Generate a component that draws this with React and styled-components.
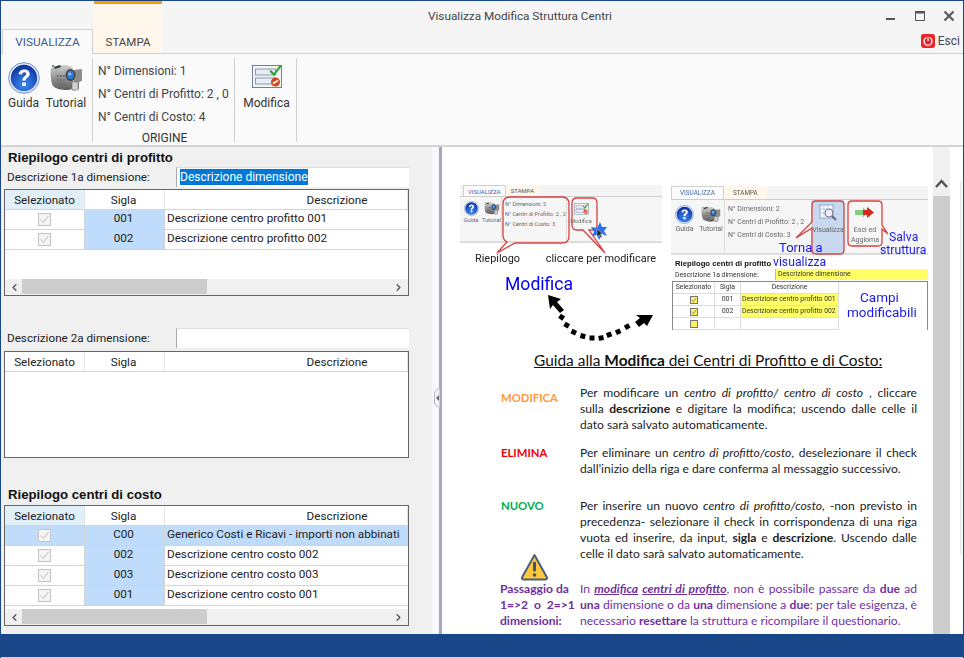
import React from "react";
import styled, { createGlobalStyle } from "styled-components";
import { ChevronLeft, ChevronRight } from "lucide-react";

const Global = createGlobalStyle`
  html, body { margin: 0; padding: 0; width: 964px; height: 658px; overflow: hidden; background: #fff; }
  * { box-sizing: border-box; }
`;

const UI = `"Roboto", "Liberation Sans", sans-serif`;
const DOC = `"Lato", "Liberation Sans", sans-serif`;

const Windowed = styled.div`
  width: 964px; height: 658px; display: flex; flex-direction: column;
  border-top: 1px solid #1a4789; border-left: 1px solid #1a4789; border-right: 1px solid #1a4789;
  font: 12px ${UI}; color: #333; background: #f5f5f5; overflow: hidden;
`;
const Header = styled.header`
  display: grid; grid-template-columns: 91px 69px 1fr auto; grid-template-rows: 28px 24px;
  background: #f5f5f5; padding-left: 1px; height: 52px; flex: none;
`;
const Tab = styled.div`
  grid-column: 1; grid-row: 2; display: flex; align-items: center; justify-content: center;
  background: #fafafa; color: #3b5a92; border: 1px solid #d0d0d0; border-bottom: none; font-size: 11.8px;
  margin-bottom: -1px; z-index: 1;
`;
const ContextTab = styled.div`
  grid-column: 2; grid-row: 1 / 3; display: flex; align-items: flex-end; justify-content: center;
  background: #fff7ec; border-top: 4px solid #ff9a00; color: #444; padding: 0 0 4px; margin-top: -1px; margin-left: 1px;
  font-size: 11.5px;
`;
const Title = styled.div`
  grid-column: 3; grid-row: 1; padding: 8px 0 0 266px; color: #444; font-size: 11.75px; white-space: nowrap;
`;
const Controls = styled.div`
  grid-column: 4; grid-row: 1; display: flex; align-items: center; gap: 17px; padding: 2px 8px 0 0;
  svg { display: block; }
`;
const Exit = styled.div`
  grid-column: 3 / 5; grid-row: 2; justify-self: end; display: flex; align-items: center; gap: 3px;
  padding: 0 3px 0 0; color: #445;
`;
const Ribbon = styled.div`
  height: 94px; flex: none; display: flex; background: #fafafa; border-top: 1px solid #d0d0d0; border-bottom: 2px solid #d4d4d4;
  padding: 4px 0 3px;
`;
const RibbonGroup = styled.div`
  width: ${p => p.$w}px; border-right: 1px solid #d0d0d0; display: flex; flex-direction: ${p => p.$col ? "column" : "row"};
  flex: none;
`;
const RibbonButton = styled.div`
  width: ${p => p.$w}px; flex: none; display: flex; flex-direction: column; align-items: center; padding-top: ${p => p.$top}px;
  gap: ${p => p.$gap}px;
  span { white-space: nowrap; }
`;
const InfoLines = styled.div`
  display: flex; flex-direction: column; gap: 7px; padding: 5px 0 0 5px; flex: 1; white-space: nowrap; color: #444;
  line-height: 16px;
`;
const GroupName = styled.div`
  text-align: center; font-size: 12px; line-height: 8px; color: #333; padding-left: 2px;
`;
const Body = styled.main`
  flex: 1; display: flex; min-height: 0; background: #f0f0f0;
`;
const Left = styled.section`
  width: 431px; flex: none; padding: 4px 0 0 3px; display: flex; flex-direction: column; font-size: 11.7px;
`;
const SectionTitle = styled.h2`
  margin: ${p => p.$top || 0}px 0 0 4px; font: bold 13.2px/14px "Liberation Sans", sans-serif; color: #111;
`;
const FieldRow = styled.div`
  display: flex; height: 20px; align-items: center; margin-top: ${p => p.$top}px; padding-left: 3px; color: #222;
`;
const FieldLabel = styled.label`
  width: 169px; flex: none;
`;
const Input = styled.div`
  width: 233px; height: 20px; background: #fff; border-left: 1px solid #aaa; border-top: 1px solid #ddd; padding: 1px 0 0 3px;
  font-size: 12px; line-height: 16px;
`;
const Selected = styled.span`
  background: #0078d7; color: #fff; display: inline-block;
`;
const Grid = styled.div`
  width: 405px; height: ${p => p.$h}px; margin-top: ${p => p.$top}px; background: #fff; border: 1px solid #666;
  display: flex; flex-direction: column; flex: none; color: #222; overflow: hidden;
`;
const Row = styled.div`
  display: grid; grid-template-columns: 80px 80px 1fr; height: 20px; flex: none;
  border-bottom: 1px solid #d4d4d4;
  background: ${p => p.$sel ? "#c0dcfc" : "transparent"};
`;
const HeadCell = styled.div`
  display: flex; align-items: center; justify-content: center; background: ${p => p.$on ? "#e1eff8" : "#fff"};
  border-right: 1px solid #e4e4e4; padding-top: 1px;
  padding-left: ${p => p.$pl || 0}px; padding-right: ${p => p.$pr || 0}px;
`;
const CheckCell = styled.div`
  display: flex; align-items: center; justify-content: center; border-right: 1px solid #d4d4d4;
`;
const CodeCell = styled.div`
  background: #c0dcfc; display: flex; align-items: center; justify-content: center; border-right: 1px solid #d4d4d4;
  padding: 0 2px 4px 0;
`;
const TextCell = styled.div`
  padding: 0 0 4px 2px; display: flex; align-items: center; white-space: nowrap; overflow: hidden;
`;
const Box = styled.div`
  width: 13px; height: 13px; border: 1px solid #c4c4c4; background: #f4f4f4; display: flex;
  svg { display: block; }
`;
const Fill = styled.div` flex: 1; `;
const HBar = styled.div`
  height: 16px; flex: none; background: #f0f0f0; display: flex; align-items: center; justify-content: space-between;
  padding: 0 4px; position: relative; color: #555;
`;
const Thumb = styled.div`
  position: absolute; left: 17px; top: 0; bottom: 1px; width: 185px; background: #cdcdcd;
`;
const Splitter = styled.div`
  width: 7px; flex: none; background: #f6f8fe; position: relative;
`;
const Grip = styled.svg`
  position: absolute; left: 2px; top: 241px;
`;
const Divider = styled.div`
  width: 3px; flex: none; background: #a6a6bc;
`;
const Doc = styled.div`
  width: 491px; flex: none; background: #fff; overflow: hidden; font-family: ${DOC}; color: #222;
`;
const Scroll = styled.div`
  width: 17px; flex: none; margin-top: 15px; background: #cdcdcd; display: flex; flex-direction: column;
`;
const ScrollTop = styled.div`
  height: 34px; background: #f0f0f0; display: flex; align-items: flex-end; justify-content: center; padding-bottom: 8px;
`;
const Margin = styled.div`
  flex: 1; background: #fff; padding: 34px 0 0 10px;
`;
const EdgeLine = styled.div`
  width: 2px; height: 374px; background: #ececec;
`;
const GuideTop = styled.div`
  position: relative; height: 199px; padding: 38px 0 0 18px; display: flex; filter: blur(.3px); font-family: ${UI};
`;
const MiniCol = styled.div`
  width: ${p => p.$w}px; margin-left: ${p => p.$ml || 0}px; padding-top: ${p => p.$top || 0}px; flex: none;
`;
const MiniTabs = styled.div`
  height: ${p => p.$h}px; display: flex; align-items: flex-end; background: #f4f4f4; padding-left: ${p => p.$pl}px;
  font-size: ${p => p.$fs}px; border-bottom: 1px solid #ccc;
`;
const MiniTab = styled.div`
  padding: 0 ${p => p.$px}px; height: 100%; display: flex; align-items: center; color: ${p => p.$ctx ? "#555" : "#4668a8"};
  background: ${p => p.$ctx ? "#fff7ec" : "#fbfbfb"}; border: ${p => p.$ctx ? "none" : "1px solid #d0d0d0"}; border-bottom: none;
`;
const MiniBody = styled.div`
  height: ${p => p.$h}px; display: flex; background: #f6f6f6; border-bottom: 2px solid #ddd; color: #666; font-size: ${p => p.$fs}px;
`;
const MiniButton = styled.div`
  display: flex; flex-direction: column; align-items: center; width: ${p => p.$w}px; flex: none; padding-top: ${p => p.$top}px; gap: ${p => p.$gap || 1}px;
  text-align: center; white-space: nowrap; line-height: ${p => p.$lh || "normal"};
  margin-left: ${p => p.$ml || 0}px;
  background: ${p => p.$on ? "#c8d8ee" : "transparent"};
`;
const MiniInfo = styled.div`
  border-left: 1px solid #ddd; border-right: 1px solid #ddd; width: ${p => p.$w}px; flex: none; padding: ${p => p.$top}px 0 0 3px;
  display: flex; flex-direction: column; gap: ${p => p.$gap}px; white-space: nowrap;
`;
const Captions = styled.div`
  display: flex; justify-content: space-between; padding: 8px 6px 0 15px; font-size: 10.9px; color: #222; line-height: 15px;
`;
const BigBlue = styled.div`
  font-size: 17.6px; color: #0000f0; margin: 8px 0 0 45px; line-height: 20px;
`;
const MiniPanel = styled.div`
  padding-left: 4px; font-size: 6.85px; color: #333;
`;
const MiniHeading = styled.div`
  font: bold 7.7px/10px "Liberation Sans", sans-serif; color: #111; padding-top: 4px; white-space: nowrap;
`;
const MiniField = styled.div`
  display: flex; height: 11px; align-items: center; white-space: nowrap;
`;
const MiniFieldLabel = styled.div` width: 100px; flex: none; `;
const MiniFieldInput = styled.div`
  width: 153px; height: 11px; background: #ffff66; border-left: 1px solid #bbb; padding-left: 2px; line-height: 11px;
`;
const MiniGrid = styled.div`
  margin-left: -3px; width: 256px; height: 49px; border: 1px solid #888; border-bottom: none; background: #fff;
  margin-top: 1px;
`;
const MiniRow = styled.div`
  display: grid; grid-template-columns: 42px 26px 98px; width: 166px; height: ${p => p.$h}px;
  border-bottom: 1px solid #ddd; line-height: ${p => p.$h - 1}px; text-align: center;
`;
const MiniCell = styled.div`
  background: ${p => p.$y ? "#ffff66" : "transparent"}; white-space: nowrap; overflow: hidden; border-right: 1px solid #ddd;
  padding-left: ${p => p.$left ? 1 : 0}px; display: flex;
  justify-content: ${p => p.$left ? "flex-start" : "center"}; align-items: center;
`;
const MiniBox = styled.div`
  width: 8px; height: 8px; background: #ffee66; border: 1px solid #777; display: flex;
`;
const Overlay = styled.svg`
  position: absolute; left: 0; top: 0; pointer-events: none;
`;
const BlueNote = styled.div`
  position: absolute; left: ${p => p.$x - 442}px; top: ${p => p.$y - 147}px; color: #1a1ae8; font-size: ${p => p.$fs || 12.2}px; line-height: 14px;
  white-space: nowrap; text-align: center;
`;
const GuideHeading = styled.h1`
  margin: 4px 0 0 92px; font: 400 15.45px/20px ${DOC}; text-decoration: underline; color: #111; white-space: nowrap;
  b { font-weight: 700; }
`;
const Guide = styled.div`
  padding-left: 59px; width: 475px; font-size: 12.1px; line-height: 16px; color: #222;
`;
const GuideRow = styled.div`
  display: grid; grid-template-columns: 79px 337px; margin-top: ${p => p.$top}px;
`;
const Tag = styled.div`
  font-weight: 700; color: ${p => p.$c}; font-size: 11.3px; padding-top: ${p => p.$pt || 0}px;
`;
const Line = styled.div`
  white-space: nowrap; text-align: ${p => p.$j ? "justify" : "left"}; text-align-last: ${p => p.$j ? "justify" : "left"};
  width: 337px; b { font-weight: 700; }
`;
const Side = styled.div`
  color: #7030a0; font-weight: 700; display: flex; flex-direction: column; margin-left: -1px;
`;
const WarnWrap = styled.div`
  height: 28px; padding-left: 20px; svg { display: block; }
`;
const PurpleText = styled.div`
  padding-top: 28px; color: #7030a0; u { text-underline-offset: 1px; }
`;
const Status = styled.footer`
  height: 24px; flex: none; background: #1a4789; border-bottom: 1px solid #c8d2e2; margin: 0 -1px;
`;

const HelpIcon = ({ s = 32 }) => (
  <svg width={s} height={s} viewBox="0 0 32 32">
    <defs>
      <radialGradient id="hg" cx=".5" cy=".75" r=".75">
        <stop offset="0" stopColor="#3f8cf0" /><stop offset="1" stopColor="#0c2f9c" />
      </radialGradient>
    </defs>
    <circle cx="16" cy="16" r="15.3" fill="#e6ecf8" stroke="#6a8fd8" strokeWidth="1" />
    <circle cx="16" cy="16" r="13.2" fill="url(#hg)" />
    <path d="M10.5 12.2c.4-3.2 2.8-4.8 5.8-4.8 3.2 0 5.4 1.8 5.4 4.4 0 3.6-4.1 3.8-4.1 6.8h-3.3c0-4.3 3.9-4.6 3.9-6.7 0-1-.8-1.6-1.9-1.6-1.3 0-2.1.9-2.3 2.3z" fill="#fff" />
    <rect x="14.2" y="20.4" width="3.6" height="3.6" rx=".8" fill="#fff" />
  </svg>
);
const CameraIcon = ({ w = 33, h = 32 }) => (
  <svg width={w} height={h} viewBox="0 0 33 32">
    <defs>
      <linearGradient id="cg" x1="0" y1="0" x2="0" y2="1">
        <stop offset="0" stopColor="#cfcfcf" /><stop offset=".6" stopColor="#8a8a8a" /><stop offset="1" stopColor="#5e5e5e" />
      </linearGradient>
    </defs>
    <path d="M1 6c4-3 13-4 19-2 2 .7 3 3 3 6v14c0 3-3 4-6 4-6 0-11-1-14-4-2-3-3-13-2-18z" fill="url(#cg)" />
    <path d="M24 8l8-1v12l-3 1v7l-6 2z" fill="#8d8d8d" />
    <rect x="22" y="20" width="6" height="8" fill="#d2d2d2" stroke="#666" strokeWidth=".5" />
    <ellipse cx="20.5" cy="13" rx="5" ry="6" fill="#444" />
    <ellipse cx="20.5" cy="13" rx="3.4" ry="4.2" fill="#2a7ed8" />
    <circle cx="19.8" cy="12" r="1.3" fill="#a7d7ff" />
    <g fill="#6f6f6f">
      <rect x="7" y="13" width="2" height="2" /><rect x="10" y="13" width="2" height="2" /><rect x="13" y="13" width="2" height="2" />
      <rect x="7" y="17" width="2" height="2" /><rect x="10" y="17" width="2" height="2" /><rect x="13" y="17" width="2" height="2" />
      <rect x="7" y="21" width="2" height="2" /><rect x="10" y="21" width="2" height="2" /><rect x="13" y="21" width="2" height="2" />
    </g>
    <path d="M4 5l6-2 1 2-6 2z" fill="#3a3a3a" />
    <rect x="2" y="3" width="2" height="2" fill="#4caf50" />
  </svg>
);
const FormIcon = ({ w = 30, h = 25 }) => (
  <svg width={w} height={h} viewBox="0 0 30 25">
    <rect x=".5" y="1.5" width="29" height="22" fill="#f4f4f4" stroke="#6f7f98" />
    <rect x="3.5" y="5" width="20" height="6" fill="#e6edf6" stroke="#8b98ad" />
    <rect x="3.5" y="14" width="20" height="6" fill="#e6edf6" stroke="#8b98ad" />
    <path d="M19 6l3 3 6-8 1.5 1.5L22 12l-4.500-4.500z" fill="#2e9e2e" />
    <circle cx="23.500" cy="18" r="4.500" fill="#d4481e" />
    <path d="M21 19.500l5-3" stroke="#fff" strokeWidth="1.600" />
  </svg>
);
const PowerIcon = () => (
  <svg width="14" height="14" viewBox="0 0 13 13">
    <rect width="13" height="13" rx="2" fill="#e8262c" />
    <circle cx="6.500" cy="6.800" r="3.700" fill="none" stroke="#fff" strokeWidth="1.200" />
    <path d="M6.500 2.500v4" stroke="#e8262c" strokeWidth="3" />
    <path d="M6.500 3v3.500" stroke="#fff" strokeWidth="1.200" />
  </svg>
);
const Check = ({ c = "#bcbcbc", s = 11 }) => (
  <svg width={s} height={s} viewBox="0 0 11 11"><path d="M1.500 5.500l3 3 5-6.500" fill="none" stroke={c} strokeWidth="1" /></svg>
);
const Warn = () => (
  <svg width="29" height="28" viewBox="0 0 29 28">
    <path d="M14.500 2L27 24.500a1.500 1.500 0 0 1-1.300 2H3.300a1.500 1.500 0 0 1-1.300-2z" fill="#ffc93c" stroke="#4c5f7a" strokeWidth="2" strokeLinejoin="round" />
    <rect x="13" y="8.500" width="3" height="10" rx="1.500" fill="#3f5470" />
    <circle cx="14.500" cy="22" r="1.800" fill="#3f5470" />
  </svg>
);

const HeadRow = ({ on }) => (
  <Row>
    <HeadCell $on={on}>Selezionato</HeadCell>
    <HeadCell $pr={2}>Sigla</HeadCell>
    <HeadCell $pl={102}>Descrizione</HeadCell>
  </Row>
);
const TableRows = ({ rows }) => rows.map(r => (
  <Row key={r.code} $sel={r.sel}>
    <CheckCell><Box><Check /></Box></CheckCell>
    <CodeCell>{r.code}</CodeCell>
    <TextCell>{r.text}</TextCell>
  </Row>
));
const Bar = () => (
  <HBar>
    <Thumb />
    <ChevronLeft size={11} strokeWidth={3} />
    <ChevronRight size={11} strokeWidth={3} />
  </HBar>
);

const profit = [
  { code: "001", text: "Descrizione centro profitto 001" },
  { code: "002", text: "Descrizione centro profitto 002" },
];
const cost = [
  { code: "C00", text: "Generico Costi e Ricavi - importi non abbinati", sel: true },
  { code: "002", text: "Descrizione centro costo 002" },
  { code: "003", text: "Descrizione centro costo 003" },
  { code: "001", text: "Descrizione centro costo 001" },
];

const Arrows = () => (
  <Overlay width="491" height="199" viewBox="442 147 491 199">
    <g fill="none" stroke="#d8413f" strokeWidth="1.300">
      <path d="M510 197h52q7 0 7 7v32q0 7-7 7h-47l-18 10 10-11q-4-2-4-7v-31q0-7 7-7z" />
      <path d="M577 198h15q5 0 5 5v22q0 5-5 5h-3l16 23-22-23h-6q-5 0-5-5v-22q0-5 5-5z" />
      <path d="M816 201h24q4 0 4 4v45q0 4-4 4h-24q-4 0-4-4v-22l-16 10 16-16v-17q0-4 4-4z" />
      <path d="M852 201h26q4 0 4 4v20l6 9-6-5v13q0 4-4 4h-26q-4 0-4-4v-37q0-4 4-4z" />
    </g>
    <path d="M600 222l2 5 5 0-3 4 3 5-5-2-3 6-2-5-5 1 2-4-3-5 6 1z" fill="#2a6fe8" />
    <path d="M597 229v8l2-2 2 3 1-1-2-3 3 0z" fill="#222" stroke="#fff" strokeWidth=".4" />
    <g fill="#000">
      <path d="M548 295l13 4-4 3 7 8-4 3-7-8-3 4z" />
      <path d="M653 315l-17 0 4 3-5 4 4 5 5-4 3 3z" />
      <g transform="translate(-.500 .500)">
        <rect x="560" y="314" width="5" height="5" transform="rotate(35 562 316)" />
        <rect x="565" y="322" width="5" height="5" transform="rotate(30 567 324)" />
        <rect x="572" y="329" width="5" height="5" transform="rotate(25 574 331)" />
        <rect x="581" y="333" width="5" height="5" transform="rotate(15 583 335)" />
        <rect x="590" y="335" width="5" height="5" />
        <rect x="599" y="335" width="5" height="5" transform="rotate(-10 601 337)" />
        <rect x="607" y="332" width="5" height="5" transform="rotate(-20 609 334)" />
        <rect x="616" y="329" width="5" height="5" transform="rotate(-25 618 331)" />
        <rect x="625" y="324" width="5" height="5" transform="rotate(-30 627 326)" />
      </g>
    </g>
  </Overlay>
);

export default function App() {
  return (
    <Windowed>
      <Global />
      <Header>
        <Tab>VISUALIZZA</Tab>
        <ContextTab>STAMPA</ContextTab>
        <Title>Visualizza Modifica Struttura Centri</Title>
        <Controls>
          <svg width="12" height="12" viewBox="0 0 12 12"><rect x="1" y="8" width="9" height="2" fill="#555" /></svg>
          <svg width="12" height="12" viewBox="0 0 12 12"><path d="M1.500 1.500h9v9h-9z" fill="none" stroke="#555" /><rect x="1" y="1" width="10" height="2.500" fill="#555" /></svg>
          <svg width="12" height="12" viewBox="0 0 12 12"><path d="M1.500 1.500l9 9M10.500 1.500l-9 9" stroke="#555" strokeWidth="2" /></svg>
        </Controls>
        <Exit><PowerIcon /><span>Esci</span></Exit>
      </Header>
      <Ribbon>
        <RibbonGroup $w={92}>
          <RibbonButton $w={45} $top={4} $gap={2}><HelpIcon /><span>Guida</span></RibbonButton>
          <RibbonButton $w={40} $top={4} $gap={2}><CameraIcon /><span>Tutorial</span></RibbonButton>
        </RibbonGroup>
        <RibbonGroup $w={142} $col>
          <InfoLines>
            <div>N° Dimensioni: 1</div>
            <div>N° Centri di Profitto: 2 , 0</div>
            <div>N° Centri di Costo: 4</div>
          </InfoLines>
          <GroupName>ORIGINE</GroupName>
        </RibbonGroup>
        <RibbonGroup $w={62}>
          <RibbonButton $w={63} $top={6} $gap={7}><FormIcon /><span>Modifica</span></RibbonButton>
        </RibbonGroup>
      </Ribbon>
      <Body>
        <Left>
          <SectionTitle>Riepilogo centri di profitto</SectionTitle>
          <FieldRow $top={2}>
            <FieldLabel>Descrizione 1a dimensione:</FieldLabel>
            <Input><Selected>Descrizione dimensione</Selected></Input>
          </FieldRow>
          <Grid $h={107} $top={2}>
            <HeadRow on />
            <TableRows rows={profit} />
            <Fill />
            <Bar />
          </Grid>
          <FieldRow $top={32}>
            <FieldLabel>Descrizione 2a dimensione:</FieldLabel>
            <Input />
          </FieldRow>
          <Grid $h={107} $top={3}>
            <HeadRow />
          </Grid>
          <SectionTitle $top={30}>Riepilogo centri di costo</SectionTitle>
          <Grid $h={121} $top={3}>
            <HeadRow on />
            <TableRows rows={cost} />
            <Fill />
            <Bar />
          </Grid>
        </Left>
        <Splitter>
          <Grip width="6" height="20" viewBox="0 0 6 20">
            <path d="M5.500 0L.5 4v12l5 4" fill="#f4f4f8" stroke="#b8b8c4" />
            <path d="M5 7L2 10l3 3z" fill="#667" />
          </Grip>
        </Splitter>
        <Divider />
        <Doc>
          <GuideTop>
            <MiniCol $w={202}>
              <MiniTabs $h={12} $pl={3} $fs={6}>
                <MiniTab $px={4}>VISUALIZZA</MiniTab>
                <MiniTab $px={5} $ctx>STAMPA</MiniTab>
              </MiniTabs>
              <MiniBody $h={46} $fs={5.6}>
                <MiniButton $w={22} $top={4}><HelpIcon s={15} /><span>Guida</span></MiniButton>
                <MiniButton $w={19} $top={4}><CameraIcon w={16} h={15} /><span>Tutorial</span></MiniButton>
                <MiniInfo $w={66} $top={4} $gap={4}>
                  <div>N° Dimensioni: 2</div>
                  <div>N° Centri di Profitto: 2 , 2</div>
                  <div>N° Centri di Costo: 3</div>
                </MiniInfo>
                <MiniButton $w={28} $top={6} $gap={3}><FormIcon w={15} h={12} /><span>Modifica</span></MiniButton>
              </MiniBody>
              <Captions><span>Riepilogo</span><span>cliccare per modificare</span></Captions>
              <BigBlue>Modifica</BigBlue>
            </MiniCol>
            <MiniCol $w={257} $ml={9} $top={1}>
              <MiniTabs $h={14} $pl={0} $fs={6.4}>
                <MiniTab $px={8}>VISUALIZZA</MiniTab>
                <MiniTab $px={9} $ctx>STAMPA</MiniTab>
              </MiniTabs>
              <MiniBody $h={55} $fs={7}>
                <MiniButton $w={27} $top={5}><HelpIcon s={19} /><span>Guida</span></MiniButton>
                <MiniButton $w={26} $top={5}><CameraIcon w={20} h={19} /><span>Tutorial</span></MiniButton>
                <MiniInfo $w={88} $top={5} $gap={5}>
                  <div>N° Dimensioni: 2</div>
                  <div>N° Centri di Profitto: 2 , 2</div>
                  <div>N° Centri di Costo: 3</div>
                </MiniInfo>
                <MiniButton $w={32} $top={4} $gap={4} $on>
                  <svg width="18" height="18" viewBox="0 0 18 18"><rect x="1" y="1" width="13" height="13" fill="#fff" stroke="#8aa0c8" /><path d="M1 5h13M1 9h13M5 1v13M9 1v13" stroke="#b8c8e0" /><circle cx="10" cy="9" r="4" fill="#eef" stroke="#778" /><path d="M13 12l4 4" stroke="#666" strokeWidth="2" /></svg>
                  <span>Visualizza</span>
                </MiniButton>
                <MiniButton $w={34} $ml={4} $top={7} $gap={7} $lh="10px">
                  <svg width="20" height="11" viewBox="0 0 20 11"><path d="M0 3h8V0l4 5.500-4 5.500V8H0z" fill="#7cd07c" /><path d="M8 3h4V0l7 5.500-7 5.500V8H8z" fill="#d02a20" /></svg>
                  <span>Esci ed<br />Aggioma</span>
                </MiniButton>
              </MiniBody>
              <MiniPanel>
                <MiniHeading>Riepilogo centri di profitto</MiniHeading>
                <MiniField>
                  <MiniFieldLabel>Descrizione 1a dimensione:</MiniFieldLabel>
                  <MiniFieldInput>Descrizione dimensione</MiniFieldInput>
                </MiniField>
                <MiniGrid>
                  <MiniRow $h={12}><MiniCell>Selezionato</MiniCell><MiniCell>Sigla</MiniCell><MiniCell>Descrizione</MiniCell></MiniRow>
                  <MiniRow $h={12}><MiniCell><MiniBox><Check c="#444" s={6} /></MiniBox></MiniCell><MiniCell>001</MiniCell><MiniCell $y $left>Descrizione centro profitto 001</MiniCell></MiniRow>
                  <MiniRow $h={12}><MiniCell><MiniBox><Check c="#444" s={6} /></MiniBox></MiniCell><MiniCell>002</MiniCell><MiniCell $y $left>Descrizione centro profitto 002</MiniCell></MiniRow>
                  <MiniRow $h={12}><MiniCell><MiniBox /></MiniCell><MiniCell /><MiniCell /></MiniRow>
                </MiniGrid>
              </MiniPanel>
            </MiniCol>
            <Arrows />
            <BlueNote $x={779} $y={241} $fs={13}>Torna a</BlueNote>
            <BlueNote $x={773} $y={255}>visualizza</BlueNote>
            <BlueNote $x={889} $y={230}>Salva</BlueNote>
            <BlueNote $x={880} $y={243}>struttura</BlueNote>
            <BlueNote $x={860} $y={290} $fs={13.5}>Campi</BlueNote>
            <BlueNote $x={847} $y={305} $fs={13.5}>modificabili</BlueNote>
          </GuideTop>
          <GuideHeading>Guida alla <b>Modifica</b> dei Centri di Profitto e di Costo:</GuideHeading>
          <Guide>
            <GuideRow $top={15}>
              <Tag $c="#ff9a3c" $pt={5}>MODIFICA</Tag>
              <div>
                <Line $j>Per modificare un <i>centro di profitto/ centro di costo</i> , cliccare</Line>
                <Line $j>sulla <b>descrizione</b> e digitare la modifica; uscendo dalle celle il</Line>
                <Line>dato sarà salvato automaticamente.</Line>
              </div>
            </GuideRow>
            <GuideRow $top={12}>
              <Tag $c="#f00000">ELIMINA</Tag>
              <div>
                <Line $j>Per eliminare un <i>centro di profitto/costo</i>, deselezionare il check</Line>
                <Line>dall’inizio della riga e dare conferma al messaggio successivo.</Line>
              </div>
            </GuideRow>
            <GuideRow $top={21}>
              <Tag $c="#00b050">NUOVO</Tag>
              <div>
                <Line $j>Per inserire un nuovo <i>centro di profitto/costo,</i> -non previsto in</Line>
                <Line $j>precedenza- selezionare il check in corrispondenza di una riga</Line>
                <Line $j>vuota ed inserire, da input, <b>sigla</b> e <b>descrizione</b>. Uscendo dalle</Line>
                <Line>celle il dato sarà salvato automaticamente.</Line>
              </div>
            </GuideRow>
            <GuideRow $top={-9}>
              <Side>
                <WarnWrap><Warn /></WarnWrap>
                <span>Passaggio da</span>
                <span>1=&gt;2 &nbsp;o&nbsp; 2=&gt;1</span>
                <span>dimensioni:</span>
              </Side>
              <PurpleText>
                <Line $j>In <b><i><u>modifica</u></i> <i><u>centri di profitto</u></i></b>, non è possibile passare da <b>due</b> ad</Line>
                <Line $j><b>una</b> dimensione o da <b>una</b> dimensione a <b>due</b>: per tale esigenza, è</Line>
                <Line>necessario <b>resettare</b> la struttura e ricompilare il questionario.</Line>
              </PurpleText>
            </GuideRow>
          </Guide>
        </Doc>
        <Scroll>
          <ScrollTop>
            <svg width="13" height="9" viewBox="0 0 13 9"><path d="M1 8l5.500-6L12 8" fill="none" stroke="#555" strokeWidth="2.500" /></svg>
          </ScrollTop>
        </Scroll>
        <Margin><EdgeLine /></Margin>
      </Body>
      <Status />
    </Windowed>
  );
}
